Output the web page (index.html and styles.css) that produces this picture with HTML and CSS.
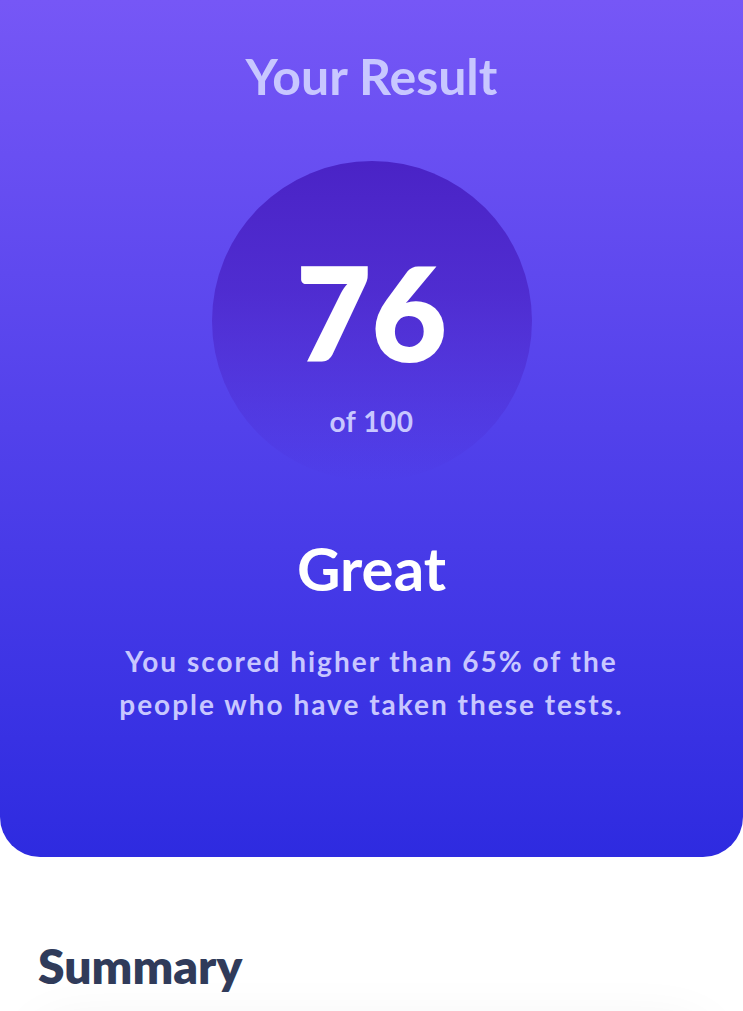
FILE: index.html
```html
<!DOCTYPE html>
<html lang="en">
<head>
<meta charset="utf-8">
<title>Results summary</title>
<link rel="stylesheet" href="styles.css">
</head>
<body>
<main class="page">
  <section class="result">
    <h1 class="result-title">Your Result</h1>
    <div class="score-circle">
      <span class="score">76</span>
      <span class="score-max">of 100</span>
    </div>
    <h2 class="rating">Great</h2>
    <p class="result-text">You scored higher than 65% of the people who have taken these tests.</p>
  </section>
  <section class="summary">
    <h2 class="summary-title">Summary</h2>
    <div class="summary-list"></div>
  </section>
</main>
</body>
</html>
```
FILE: styles.css
```css
* { box-sizing: border-box; }
html, body { margin: 0; padding: 0; background: #ffffff; }
body {
  font-family: "Lato", "Open Sans", sans-serif;
  overflow: hidden;
  height: 1011px;
}
.page { display: flex; flex-direction: column; }

.result {
  display: flex;
  flex-direction: column;
  align-items: center;
  background: linear-gradient(180deg, #7657f6 0%, #2e2be0 100%);
  border-radius: 0 0 40px 40px;
  padding: 46px 20px 131px;
  text-align: center;
}
.result-title {
  margin: 0;
  font-size: 50px;
  line-height: 60px;
  font-weight: 700;
  color: #c8c7ff;
}
.score-circle {
  margin-top: 55px;
  width: 320px;
  height: 320px;
  border-radius: 50%;
  background: linear-gradient(180deg, #4a23c6 0%, rgba(74, 35, 198, 0.75) 40%, rgba(80, 64, 235, 0) 100%);
  display: flex;
  flex-direction: column;
  align-items: center;
  padding-top: 86px;
}
.score {
  font-size: 130px;
  line-height: 130px;
  font-weight: 800;
  color: #ffffff;
}
.score-max {
  margin-top: 27px;
  font-size: 28px;
  line-height: 34px;
  font-weight: 700;
  color: #c8c7ff;
  letter-spacing: 0.5px;
}
.rating {
  margin: 51px 0 0;
  font-size: 60px;
  line-height: 72px;
  font-weight: 700;
  color: #ffffff;
}
.result-text {
  margin: 36px 0 0;
  max-width: 540px;
  font-size: 28px;
  line-height: 43px;
  font-weight: 700;
  letter-spacing: 2px;
  color: #c8c7ff;
}

.summary {
  padding: 80px 38px 0;
}
.summary-title {
  margin: 0;
  font-size: 48px;
  line-height: 58px;
  font-weight: 800;
  color: #303b5a;
}
.summary-list {
  margin-top: 34px;
  height: 120px;
  border-radius: 24px;
  background: #ffffff;
  box-shadow: 0 0 60px rgba(0, 0, 0, 0.07);
}
```
